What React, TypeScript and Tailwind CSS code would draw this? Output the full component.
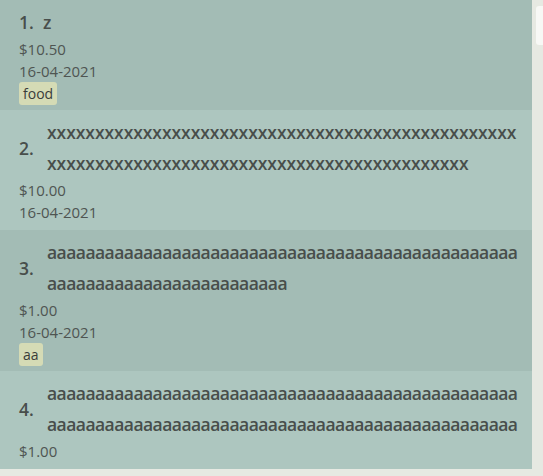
type Expense = {
  index: number;
  lines: string[];
  amount: string;
  date: string;
  tags: string[];
  dark: boolean;
};

const x = (n: number) => 'x'.repeat(n);
const a = (n: number) => 'a'.repeat(n);

const expenses: Expense[] = [
  { index: 1, lines: ['z'], amount: '$10.50', date: '16-04-2021', tags: ['food'], dark: true },
  { index: 2, lines: [x(49), x(44)], amount: '$10.00', date: '16-04-2021', tags: [], dark: false },
  { index: 3, lines: [a(49), a(25)], amount: '$1.00', date: '16-04-2021', tags: ['aa'], dark: true },
  { index: 4, lines: [a(49), a(49)], amount: '$1.00', date: '', tags: [], dark: false },
];

function ExpenseCard({ expense }: { expense: Expense }) {
  const wrapped = expense.lines.length > 1;
  return (
    <div
      className={`px-[19px] pt-[7px] ${expense.tags.length ? 'pb-[5px]' : 'pb-[7px]'} ${
        expense.dark ? 'bg-[#a3bcb5]' : 'bg-[#adc6bf]'
      }`}
    >
      <div className="flex items-center text-[17.5px] font-semibold leading-[31px] text-[#484e4b]">
        <span className={`shrink-0 ${wrapped ? 'w-[28px]' : 'w-[24px]'}`}>{expense.index}.</span>
        <div className="flex flex-col">
          {expense.lines.map((line, i) => (
            <span
              key={i}
              className={`whitespace-nowrap ${line.startsWith('x') ? 'tracking-[-0.06px]' : 'tracking-[-0.55px]'}`}
            >
              {line}
            </span>
          ))}
        </div>
      </div>
      <div className="text-[15px] leading-[22px] text-[#4f5552]">{expense.amount}</div>
      {expense.date && <div className="text-[15px] leading-[22px] text-[#4f5552]">{expense.date}</div>}
      {expense.tags.length > 0 && (
        <div className="flex gap-1">
          {expense.tags.map((tag) => (
            <span
              key={tag}
              className="flex h-[23px] items-center rounded-[3px] bg-[#d5dbb5] px-[4px] text-[14px] text-[#3a3d3a]"
            >
              {tag}
            </span>
          ))}
        </div>
      )}
    </div>
  );
}

export default function App() {
  return (
    <div
      className="flex h-[476px] w-[543px] overflow-hidden bg-[#e6e9e2]"
      style={{ fontFamily: '"Open Sans", "Noto Sans", sans-serif' }}
    >
      <div className="flex w-[532px] shrink-0 flex-col self-start">
        {expenses.map((e) => (
          <ExpenseCard key={e.index} expense={e} />
        ))}
      </div>
      <div className="flex-1 pl-[4px] pt-[6px]">
        <div className="h-[39px] rounded-l-[3px] bg-[#f7f8f5]" />
      </div>
    </div>
  );
}
